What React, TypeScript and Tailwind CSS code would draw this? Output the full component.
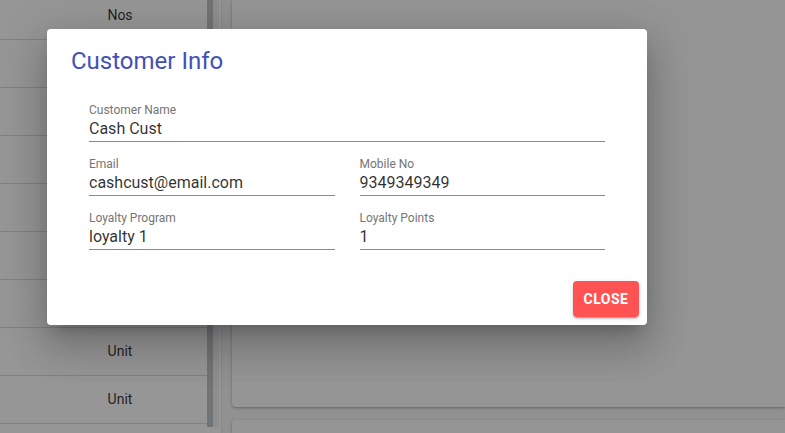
import React from "react";

const rows = ["Nos", "", "", "", "", "", "", "Unit", "Unit", ""];

const Field: React.FC<{ label: string; value: string }> = ({ label, value }) => (
  <div className="flex flex-col">
    <span className="pt-[1px] text-[12px] leading-[14px] text-[#757575]">{label}</span>
    <span className="text-[16px] leading-[24px] text-[rgba(0,0,0,0.82)] border-b border-[#8a8a8a]">{value}</span>
  </div>
);

const App: React.FC = () => {
  return (
    <div
      className="relative h-[433px] w-[785px] overflow-hidden bg-[#f7f7f7]"
      style={{ fontFamily: "Roboto, 'Liberation Sans', sans-serif" }}
    >
      {/* Page behind the dialog */}
      <div className="flex h-full">
        {/* Left list */}
        <div className="flex h-full w-[222px] border-r border-[#e6e6e6] bg-white">
          <div className="-mt-2 flex w-[207px] flex-col">
            {rows.map((r, i) => (
              <div
                key={i}
                className="flex h-12 shrink-0 items-center justify-center border-b border-[#dcdcdc] pl-[33px] text-[14px] text-[rgba(0,0,0,0.8)]"
              >
                {r}
              </div>
            ))}
          </div>
          <div className="h-[427px] w-[6px] bg-[#c1c5cb]" />
          <div className="h-[427px] w-[6px] bg-[#f2f2f2]" />
        </div>

        {/* Right cards */}
        <div className="ml-[10px] flex flex-1 flex-col gap-[13px]">
          <div className="h-[407px] rounded-bl-[4px] bg-[#fdfdfd] shadow-[0_1px_3px_rgba(0,0,0,0.3)]" />
          <div className="flex-1 rounded-tl-[4px] bg-[#fdfdfd] shadow-[0_1px_3px_rgba(0,0,0,0.3)]" />
        </div>
      </div>

      {/* Backdrop */}
      <div className="absolute inset-0 bg-black/[0.41]" />

      {/* Dialog */}
      <div className="absolute left-[47px] top-[29px] flex h-[296px] w-[600px] flex-col rounded-[4px] bg-white shadow-[0_11px_15px_-7px_rgba(0,0,0,0.2),0_24px_38px_3px_rgba(0,0,0,0.14),0_9px_46px_8px_rgba(0,0,0,0.12)]">
        <h2 className="pl-6 pt-4 text-[24px] leading-[32px] font-normal text-[#3f51b5]">Customer Info</h2>

        <div className="mt-[25px] grid grid-cols-2 gap-x-[25px] gap-y-[14px] px-[42px]">
          <div className="col-span-2">
            <Field label="Customer Name" value="Cash Cust" />
          </div>
          <Field label="Email" value="cashcust@email.com" />
          <Field label="Mobile No" value="9349349349" />
          <Field label="Loyalty Program" value="loyalty 1" />
          <Field label="Loyalty Points" value="1" />
        </div>

        <div className="mt-auto flex justify-end p-2">
          <button className="flex h-9 w-[66px] items-center justify-center rounded-[4px] bg-[#ff5252] text-[14px] font-bold tracking-[0.5px] text-white shadow-[0_3px_1px_-2px_rgba(0,0,0,0.2),0_2px_2px_0_rgba(0,0,0,0.14),0_1px_5px_0_rgba(0,0,0,0.12)]">
            CLOSE
          </button>
        </div>
      </div>
    </div>
  );
};

export default App;
